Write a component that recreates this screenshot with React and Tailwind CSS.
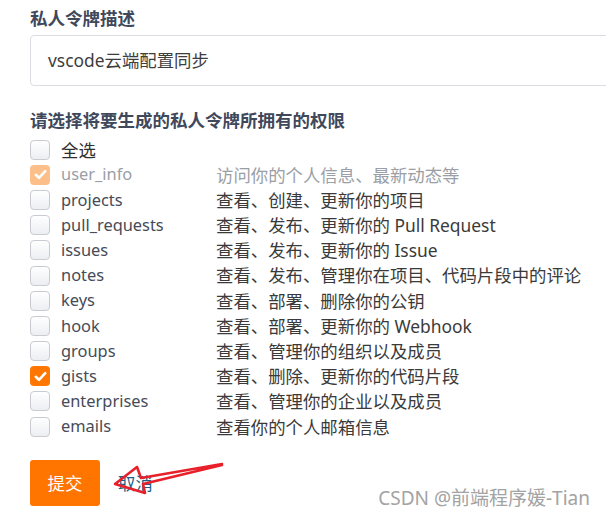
import React from 'react';

const scopes = [
  { name: 'user_info', desc: '访问你的个人信息、最新动态等', checked: true, disabled: true },
  { name: 'projects', desc: '查看、创建、更新你的项目' },
  { name: 'pull_requests', desc: '查看、发布、更新你的 Pull Request' },
  { name: 'issues', desc: '查看、发布、更新你的 Issue' },
  { name: 'notes', desc: '查看、发布、管理你在项目、代码片段中的评论' },
  { name: 'keys', desc: '查看、部署、删除你的公钥' },
  { name: 'hook', desc: '查看、部署、更新你的 Webhook' },
  { name: 'groups', desc: '查看、管理你的组织以及成员' },
  { name: 'gists', desc: '查看、删除、更新你的代码片段', checked: true },
  { name: 'enterprises', desc: '查看、管理你的企业以及成员' },
  { name: 'emails', desc: '查看你的个人邮箱信息' },
];

const Checkbox = ({ checked, disabled }) => {
  if (checked) {
    return (
      <span
        className={`flex h-[20px] w-[20px] shrink-0 items-center justify-center rounded-[4px] ${
          disabled ? 'bg-[#fdbf8a]' : 'bg-[#ff7700]'
        }`}
      >
        <svg width="13" height="11" viewBox="0 0 13 11" fill="none">
          <path d="M1.8 5.8 L5 8.8 L11.2 2.2" stroke="#fff" strokeWidth="2.6" strokeLinecap="round" strokeLinejoin="round" />
        </svg>
      </span>
    );
  }
  return (
    <span className="h-[20px] w-[20px] shrink-0 rounded-[4px] border border-[#c9cbd1] bg-gradient-to-b from-white to-[#eceef2]" />
  );
};

const Row = ({ name, desc, checked, disabled }) => (
  <div className="flex h-[25.2px] items-center">
    <Checkbox checked={checked} disabled={disabled} />
    <span className={`ml-[11px] w-[155px] text-[16.4px] ${disabled ? 'text-[#9a9ea6]' : 'text-[#464b57]'}`}>{name}</span>
    <span className={disabled ? 'text-[#9a9ea6]' : 'text-[#3a3a3a]'}>{desc}</span>
  </div>
);

export default function App() {
  return (
    <div
      className="relative h-[519px] w-[606px] overflow-hidden bg-white pl-[30px] text-[17.4px]"
      style={{ fontFamily: '"Noto Sans", "Noto Sans CJK SC", sans-serif' }}
    >
      <h2 className="pt-[6px] text-[17.5px] leading-[24px] font-bold text-[#40485b]">私人令牌描述</h2>
      <div className="mt-[5px] flex h-[51px] w-[620px] items-center rounded-[4px] border border-[#dcdde2] pl-[17px] text-[#3d3d3d]">
        vscode云端配置同步
      </div>

      <h2 className="mt-[22px] text-[17.5px] leading-[24px] font-bold text-[#40485b]">请选择将要生成的私人令牌所拥有的权限</h2>
      <div className="mt-[5px] flex flex-col">
        <div className="flex h-[25.2px] items-center">
          <Checkbox />
          <span className="ml-[11px] text-[#2f2f2f]">全选</span>
        </div>
        {scopes.map((s) => (
          <Row key={s.name} {...s} />
        ))}
      </div>

      <div className="mt-[21px] flex items-center gap-[18px]">
        <button
          type="button"
          className="h-[46px] w-[70px] rounded-[3px] bg-[#ff7500] text-[17.4px] text-white"
        >
          提交
        </button>
        <span className="text-[17.4px] text-[#1d5e86]">取消</span>
      </div>

      {/* red annotation arrow */}
      <svg className="pointer-events-none absolute left-0 top-0" width="606" height="519">
        <path
          d="M222 464 L141 478 L137 467 L115 484 L145 493 L143 484 L222 465"
          fill="none"
          stroke="#e8202a"
          strokeWidth="2.6"
          strokeLinejoin="round"
          strokeLinecap="round"
        />
      </svg>

      <div
        className="absolute right-[16px] bottom-[7px] text-[19px] text-[#a3a3a3]"
        style={{ textShadow: '0 0 1px #fff' }}
      >
        CSDN @前端程序媛-Tian
      </div>
    </div>
  );
}
